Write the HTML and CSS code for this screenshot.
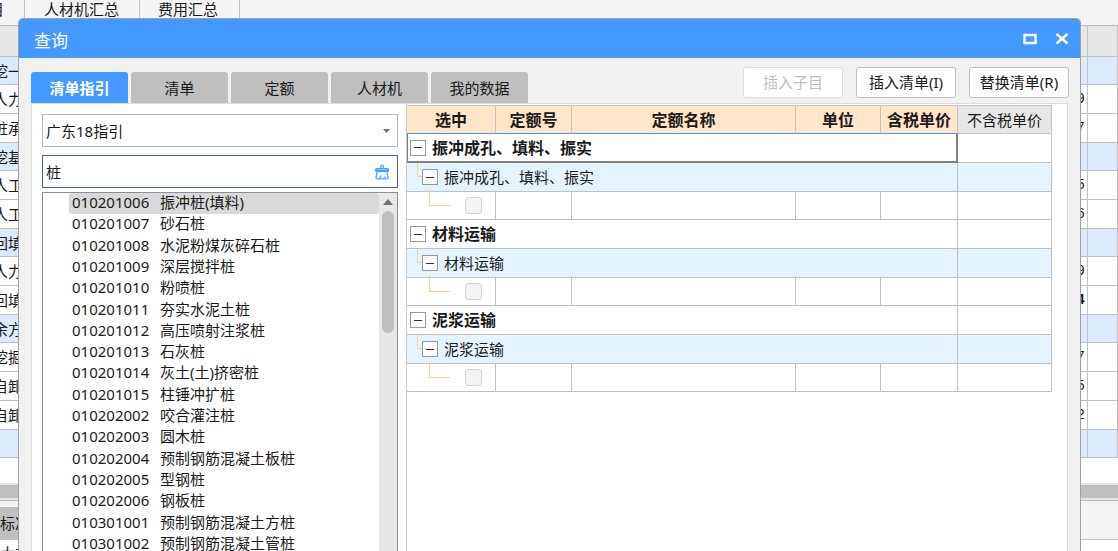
FILE: index.html
```html
<!DOCTYPE html>
<html lang="zh-CN">
<head>
<meta charset="utf-8">
<title>查询</title>
<link rel="stylesheet" href="styles.css">
</head>
<body>
<div class="app">
  <nav class="app-tabs">
    <a href="#" class="app-tab first">目</a>
    <a href="#" class="app-tab second">人材机汇总</a>
    <a href="#" class="app-tab third">费用汇总</a>
  </nav>
  <table class="sheet">
    <colgroup><col><col class="col-price"><col class="col-extra"></colgroup>
    <thead><tr><th></th><th></th><th></th></tr></thead>
    <tbody>
      <tr class="group"><td>挖一</td><td></td><td></td></tr>
      <tr><td>人力</td><td>9</td><td></td></tr>
      <tr><td>桩承</td><td>7</td><td></td></tr>
      <tr class="group"><td>挖基</td><td></td><td></td></tr>
      <tr><td>人工</td><td>5</td><td></td></tr>
      <tr><td>人工</td><td>6</td><td></td></tr>
      <tr class="group"><td>回填</td><td></td><td></td></tr>
      <tr><td>人力</td><td>9</td><td></td></tr>
      <tr><td>回填</td><td class="strong">4</td><td></td></tr>
      <tr class="group"><td>余方</td><td></td><td></td></tr>
      <tr><td>挖掘</td><td>7</td><td></td></tr>
      <tr><td>自卸</td><td>5</td><td></td></tr>
      <tr><td>自卸</td><td>2</td><td></td></tr>
      <tr class="group"><td></td><td></td><td></td></tr>
    </tbody>
  </table>
  <div class="sheet-scroll"><div class="sheet-scroll-thumb"></div></div>
  <div class="lower">
    <div class="lower-tabs"><a href="#" class="lower-tab">标准</a></div>
    <div class="lower-body">大玄</div>
  </div>
</div>

<section class="dialog" role="dialog" aria-labelledby="dialog-title">
  <header class="titlebar">
    <h1 id="dialog-title">查询</h1>
    <button class="win-btn" aria-label="最大化"><svg width="14" height="12" viewBox="0 0 14 12"><path d="M1.500 2h11v8h-11z" fill="none" stroke="#fff" stroke-width="2.400"/></svg></button>
    <button class="win-btn" aria-label="关闭"><svg width="14" height="12" viewBox="0 0 14 12"><path d="M1.500 1l11 9.500M12.500 1L1.500 10.500" fill="none" stroke="#fff" stroke-width="2.600"/></svg></button>
  </header>

  <div class="toolbar">
    <div class="tabs" role="tablist">
      <button class="tab active" role="tab" aria-selected="true">清单指引</button>
      <button class="tab" role="tab">清单</button>
      <button class="tab" role="tab">定额</button>
      <button class="tab" role="tab">人材机</button>
      <button class="tab" role="tab">我的数据</button>
    </div>
    <div class="actions">
      <button class="action" disabled>插入子目</button>
      <button class="action">插入清单(I)</button>
      <button class="action">替换清单(R)</button>
    </div>
  </div>

  <div class="panel">
    <aside class="side">
      <div class="select-box">
        <select aria-label="指引"><option>广东18指引</option></select>
        <svg class="caret" width="7" height="4" viewBox="0 0 7 4"><path d="M0 0h7L3.500 4z" fill="#777"/></svg>
      </div>
      <div class="search-box">
        <input type="text" value="桩" aria-label="搜索">
        <button class="clear" aria-label="清除">
          <svg width="16" height="16" viewBox="0 0 16 16"><path d="M6.500 4.500V2q1.500-1.500 3 0v2.500" fill="#b5d6ff" stroke="#66adff" stroke-width="1.200"/><rect x="1" y="4" width="14" height="4" rx="1.500" fill="#4a9cff"/><path d="M3 5.500h10" stroke="#9cc9ff"/><path d="M3 8l-1 6q0 .8.800.8h10.400q.800 0 .800-.800l-1-6" fill="#f4f9ff" stroke="#5aa5ff" stroke-width="1.300"/><path d="M5 14.500q1.800-.800 2-3M9 14.500q1.800 0 2.500-2" fill="none" stroke="#5aa5ff" stroke-width="1.200"/></svg>
        </button>
      </div>
      <div class="list-box">
        <ul class="list">
          <li class="selected"><span class="code">010201006</span>振冲桩(填料)</li>
          <li><span class="code">010201007</span>砂石桩</li>
          <li><span class="code">010201008</span>水泥粉煤灰碎石桩</li>
          <li><span class="code">010201009</span>深层搅拌桩</li>
          <li><span class="code">010201010</span>粉喷桩</li>
          <li><span class="code">010201011</span>夯实水泥土桩</li>
          <li><span class="code">010201012</span>高压喷射注浆桩</li>
          <li><span class="code">010201013</span>石灰桩</li>
          <li><span class="code">010201014</span>灰土(土)挤密桩</li>
          <li><span class="code">010201015</span>柱锤冲扩桩</li>
          <li><span class="code">010202002</span>咬合灌注桩</li>
          <li><span class="code">010202003</span>圆木桩</li>
          <li><span class="code">010202004</span>预制钢筋混凝土板桩</li>
          <li><span class="code">010202005</span>型钢桩</li>
          <li><span class="code">010202006</span>钢板桩</li>
          <li><span class="code">010301001</span>预制钢筋混凝土方桩</li>
          <li><span class="code">010301002</span>预制钢筋混凝土管桩</li>
        </ul>
        <div class="scrollbar">
          <svg width="10" height="6" viewBox="0 0 10 6"><path d="M0 6h10L5 0z" fill="#707070"/></svg>
          <div class="thumb"></div>
        </div>
      </div>
    </aside>

    <main class="detail">
      <table class="quota">
        <colgroup><col class="c-pick"><col class="c-no"><col class="c-name"><col class="c-unit"><col class="c-tax"><col class="c-notax"></colgroup>
        <thead>
          <tr><th>选中</th><th>定额号</th><th>定额名称</th><th>单位</th><th>含税单价</th><th class="plain">不含税单价</th></tr>
        </thead>
        <tbody>
          <tr class="top"><td colspan="5" class="focused"><div class="node"><button class="toggle" aria-label="折叠"></button>振冲成孔、填料、振实</div></td><td></td></tr>
          <tr class="sub"><td colspan="5"><div class="node"><i class="branch"></i><button class="toggle" aria-label="折叠"></button>振冲成孔、填料、振实</div></td><td></td></tr>
          <tr class="leaf"><td><div class="node"><i class="branch"></i><input type="checkbox" disabled aria-label="选中"></div></td><td></td><td></td><td></td><td></td><td></td></tr>
          <tr class="top"><td colspan="5"><div class="node"><button class="toggle" aria-label="折叠"></button>材料运输</div></td><td></td></tr>
          <tr class="sub"><td colspan="5"><div class="node"><i class="branch"></i><button class="toggle" aria-label="折叠"></button>材料运输</div></td><td></td></tr>
          <tr class="leaf"><td><div class="node"><i class="branch"></i><input type="checkbox" disabled aria-label="选中"></div></td><td></td><td></td><td></td><td></td><td></td></tr>
          <tr class="top"><td colspan="5"><div class="node"><button class="toggle" aria-label="折叠"></button>泥浆运输</div></td><td></td></tr>
          <tr class="sub"><td colspan="5"><div class="node"><i class="branch"></i><button class="toggle" aria-label="折叠"></button>泥浆运输</div></td><td></td></tr>
          <tr class="leaf"><td><div class="node"><i class="branch"></i><input type="checkbox" disabled aria-label="选中"></div></td><td></td><td></td><td></td><td></td><td></td></tr>
        </tbody>
      </table>
    </main>
  </div>
</section>
</body>
</html>
```
FILE: styles.css
```css
* { box-sizing: border-box; }
html, body { height: 100%; }
body {
  margin: 0;
  position: relative;
  overflow: hidden;
  background: #fff;
  color: #1a1a1a;
  font: 15px/20px "Noto Sans", "Noto Sans CJK SC", sans-serif;
}
button, input, select { font: inherit; color: inherit; margin: 0; padding: 0; }
a { color: inherit; text-decoration: none; }

/* Main window behind the dialog */
.app { height: 100%; display: flex; flex-direction: column; overflow: hidden; }
.app-tabs { display: flex; flex: none; height: 26px; background: #f4f4f4; border-bottom: 1px solid #bdbdbd; line-height: 18px; }
.app-tab { display: flex; white-space: nowrap; border-right: 1px solid #c4c4c4; }
.first { width: 25px; padding-right: 20px; justify-content: flex-end; overflow: hidden; }
.second { padding: 0 20px 0 19px; }
.third { padding: 0 21px 0 18px; }
.sheet { width: 100%; flex: none; table-layout: fixed; border-collapse: separate; border-spacing: 0; line-height: 16px; }
.sheet th { height: 31px; background: #e7e7e7; }
.sheet th, .sheet td { padding: 0; border-bottom: 1px solid #c0c0c0; border-right: 1px solid #c0c0c0; white-space: nowrap; overflow: hidden; }
.sheet td { height: 29px; }
.sheet .group td { height: 28px; background: #dde9fd; }
.sheet td:first-child { text-indent: -7px; }
.sheet td:nth-child(2) { padding-right: 2px; text-align: right; font-family: "Liberation Mono", monospace; font-size: 14px; }
.sheet .strong { font-weight: bold; }
.col-price { width: 100px; }
.col-extra { width: 30px; }
.sheet-scroll { flex: none; margin-top: 25px; padding: 2px 0; background: #e5e5e5; }
.sheet-scroll-thumb { height: 13px; background: #bfbfbf; }
.lower { flex: 1; border-top: 1px solid #bdbdbd; }
.lower-tabs { display: flex; height: 39px; padding-top: 6px; background: #f4f4f4; border-bottom: 1px solid #c4c4c4; }
.lower-tab { padding: 6px 10px 0 0; background: #bfbfbf; }
.lower-body { padding-top: 3px; }

/* Dialog */
.dialog {
  position: absolute;
  top: 18px; left: 18px; right: 37px; bottom: 0;
  display: flex; flex-direction: column;
  overflow: hidden;
  background: #f1f1f1;
  border: 1px solid #a0a0a0;
  border-bottom: 0;
  border-radius: 5px 5px 0 0;
}
.titlebar { flex: none; display: flex; align-items: center; height: 39px; padding: 0 9px 0 15px; gap: 14px; background: #4499ff; color: #fff; }
.titlebar h1 { flex: 1; margin: 0; padding-top: 4px; font-size: 17px; font-weight: 400; line-height: 24px; }
.win-btn { display: flex; justify-content: center; width: 18px; border: 0; background: none; }
.toolbar { flex: none; display: flex; justify-content: space-between; padding: 9px 11px 0 12px; }
.tabs { display: flex; gap: 3px; padding-top: 5px; }
.tab { width: 97px; height: 31px; border: 0; border-radius: 3px 3px 0 0; background: #bfbfbf; line-height: 18px; }
.tab.active { background: #4499ff; color: #fff; font-weight: bold; }
.actions { display: flex; gap: 13px; }
.action { width: 100px; height: 31px; padding-bottom: 2px; white-space: nowrap; background: #fff; border: 1px solid #c0c0c0; border-radius: 3px; }
.action:disabled { color: #bfbfbf; border-color: #dcdcdc; }

.panel { flex: 1; min-height: 0; display: flex; margin: 0 12px; background: #fff; border: 1px solid #dcdcdc; border-bottom: 0; }
.side { flex: none; width: 374px; padding: 10px 8px 0 10px; display: flex; flex-direction: column; }
.select-box { flex: none; display: flex; align-items: center; height: 33px; padding: 0 7px 0 3px; border: 1px solid #b8b8b8; }
.select-box select { flex: 1; height: 100%; appearance: none; border: 0; background: none; }
.search-box { flex: none; display: flex; align-items: center; height: 33px; margin: 8px 0 4px; padding: 0 7px 0 3px; border: 1px solid #3c64a8; }
.search-box input { flex: 1; min-width: 0; height: 100%; border: 0; background: none; outline: 0; }
.clear { display: flex; border: 0; background: none; }
.list-box { flex: 1; min-height: 0; display: flex; border: 1px solid #8790a0; border-bottom: 0; }
.list { flex: 1; height: 362px; margin: 0; padding: 0 0 0 26px; list-style: none; display: grid; grid-template-rows: repeat(17, 1fr); }
.list li { display: flex; align-items: center; padding: 0 0 2px 3px; line-height: 19px; white-space: nowrap; }
.list .selected { background: #d9d9d9; border-radius: 3px; }
.code { width: 88px; }
.scrollbar { flex: none; width: 18px; padding-top: 6px; display: flex; flex-direction: column; align-items: center; gap: 6px; background: #e7e7e7; }
.thumb { width: 12px; height: 122px; border-radius: 6px; background: #bfbfbf; }

.detail { flex: 1; min-width: 0; border-left: 1px solid #c8c8c8; padding: 1px 15px 0 0; }
.quota { width: 100%; table-layout: fixed; border-collapse: separate; border-spacing: 0; line-height: 20px; }
.c-pick { width: 89px; }
.c-no { width: 76px; }
.c-unit { width: 85px; }
.c-tax { width: 77px; }
.c-notax { width: 94px; }
.quota th { height: 29px; padding: 0; background: #ffe6c8; border: 1px solid #c4c4c4; border-width: 1px 1px 1px 0; border-bottom-color: #4499ff; font-size: 16px; white-space: nowrap; }
.quota th.plain { background: #e7e7e7; border-bottom-color: #c4c4c4; font-size: 15px; font-weight: 400; }
.quota td { padding: 0; height: 29px; border: 1px solid #c0c0c0; border-width: 0 1px 1px 0; }
.quota .leaf td { height: 28px; }
.quota .sub td { background: #e5f3ff; }
.quota .focused { border: 2px solid #808080; border-top: 0; border-left-width: 1px; }
.node { display: flex; align-items: center; height: 20px; white-space: nowrap; }
.top .node { padding-left: 3px; gap: 6px; font-size: 16px; font-weight: bold; }
.top .focused .node { padding-left: 2px; }
.sub .node { padding-left: 10px; }
.sub .toggle { margin-right: 6px; }
.toggle { flex: none; display: flex; align-items: center; justify-content: center; width: 16px; height: 16px; border: 1px solid #999; background: #fff; }
.toggle::before { content: ""; width: 8px; height: 1px; background: #333; }
.branch { align-self: flex-start; height: 14px; margin-top: -4px; border: 1px solid #ffd08c; border-width: 0 0 1px 1px; }
.sub .branch { width: 5px; }
.leaf .node { padding-left: 22px; }
.leaf .branch { width: 21px; height: 17px; margin-top: -7px; }
.leaf input { appearance: none; width: 17px; height: 17px; margin-left: 15px; border: 1px solid #d4d4d4; border-radius: 3px; background: #f3f3f3; }
```
